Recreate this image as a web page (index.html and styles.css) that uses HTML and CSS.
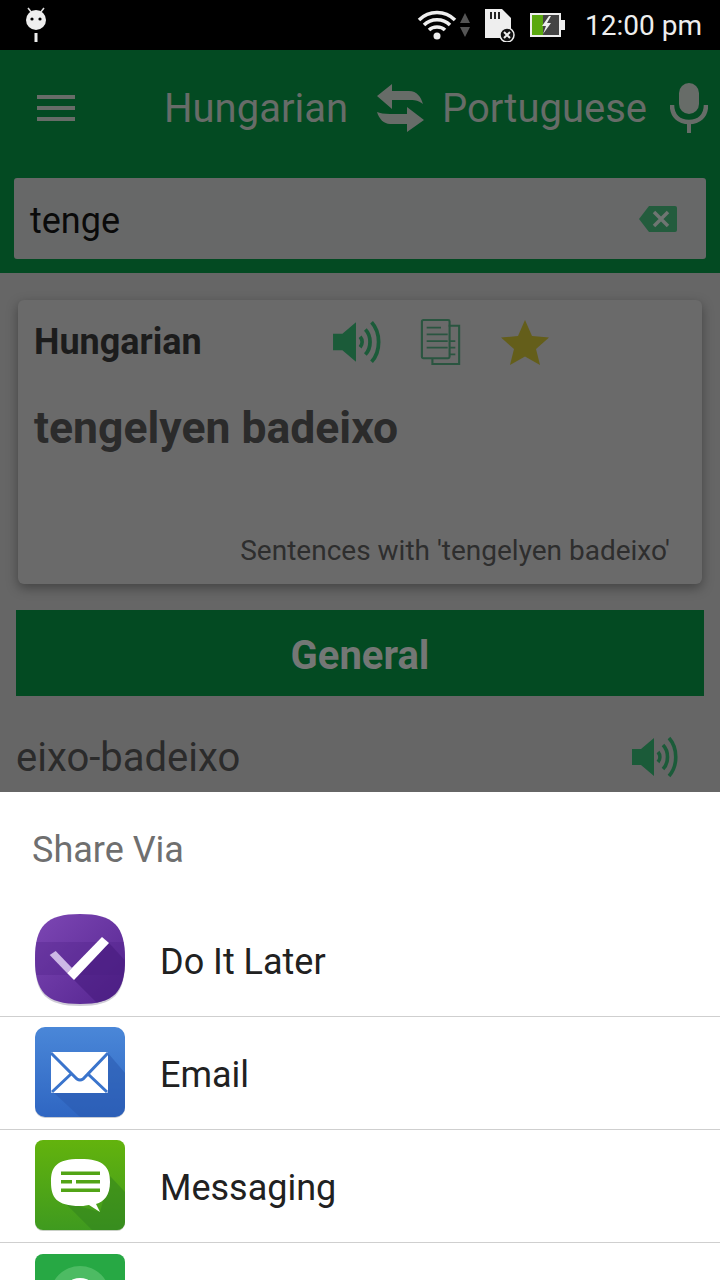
FILE: index.html
```html
<!DOCTYPE html>
<html lang="en">
<head>
<meta charset="utf-8">
<title>Share Via</title>
<link rel="stylesheet" href="styles.css">
</head>
<body>
<div class="screen">
  <div class="status">
    <svg class="st-android" width="26" height="44" viewBox="0 0 26 44"><path d="M5 5l4 5M21 5l-4 5" stroke="#ddd" stroke-width="1.600"/><circle cx="13" cy="17" r="10" fill="#eee"/><circle cx="9" cy="16" r="1.600" fill="#000"/><circle cx="17" cy="16" r="1.600" fill="#000"/><rect x="11.500" y="30" width="3" height="9" fill="#eee"/></svg>
    <div class="st-right">
      <svg width="40" height="34" viewBox="0 0 40 34"><path d="M2 12c10-10 26-10 36 0M7 17c7-7 19-7 26 0M12 22c4-4 12-4 16 0" fill="none" stroke="#eee" stroke-width="3.500"/><circle cx="20" cy="28" r="3.500" fill="#eee"/></svg>
      <svg class="st-arrows" width="12" height="28" viewBox="0 0 12 28"><path d="M6 2l5 10H1zM1 16h10L6 26z" fill="#555"/></svg>
      <svg class="st-sd" width="34" height="34" viewBox="0 0 34 34"><path d="M2 1h17l9 9v20H2z" fill="#eee"/><path d="M7 4h2v7H7zM11 4h2v7h-2zM15 4h2v7h-2z" fill="#222"/><circle cx="24" cy="27" r="7" fill="#111" stroke="#eee" stroke-width="1.500"/><path d="M21 24l6 6M27 24l-6 6" stroke="#eee" stroke-width="2"/></svg>
      <svg class="st-batt" width="38" height="28" viewBox="0 0 38 28"><rect x="1" y="2" width="31" height="24" fill="#eee"/><rect x="3" y="4" width="27" height="20" fill="#444"/><rect x="3" y="4" width="11" height="20" fill="#5aa80f"/><rect x="32" y="9" width="4" height="10" fill="#eee"/><path d="M20 5l-7 10h4l-3 8 8-11h-4l4-7z" fill="#eee"/></svg>
      <span class="st-time">12:00 pm</span>
    </div>
  </div>

  <header class="appbar">
    <div class="appbar-top">
      <svg class="menu" width="38" height="26" viewBox="0 0 38 26"><path d="M0 0h38v4H0zM0 11h38v4H0zM0 22h38v4H0z" fill="#676c68"/></svg>
      <span class="lang lang-a">Hungarian</span>
      <svg class="swap" width="48" height="48" viewBox="0 0 48 48"><path d="M1 12L16 0v7h17c8 0 12 6 14 13-5-4-9-4-14-4H16v9zM48 36L31 23v7H14c-6 0-10-1-13-2 2 7 7 12 13 12h17v8z" fill="#676c68"/></svg>
      <span class="lang lang-b">Portuguese</span>
      <svg class="mic" width="38" height="50" viewBox="0 0 38 50"><rect x="9" y="0" width="20" height="31" rx="10" fill="#676c68"/><path d="M2 22c0 11 7 17 17 17s17-6 17-17" fill="none" stroke="#676c68" stroke-width="4.500"/><rect x="17" y="38" width="4" height="12" fill="#676c68"/></svg>
    </div>
    <div class="search">
      <span class="search-text">tenge</span>
      <svg width="38" height="28" viewBox="0 0 38 28"><path d="M10 1h26a2 2 0 0 1 2 2v22a2 2 0 0 1-2 2H10L0 14z" fill="#235c3d"/><path d="M15 7l14 14M29 7L15 21" stroke="#6f7572" stroke-width="3.500"/></svg>
    </div>
  </header>

  <main class="content">
    <section class="card">
      <div class="card-head">
        <span class="card-lang">Hungarian</span>
        <div class="card-icons">
          <svg width="50" height="48" viewBox="0 0 48 46"><path d="M1 15h9L23 4v38L10 31H1z" fill="#1b5b39"/><path d="M27 18c2.500 3 2.500 7 0 10M32 11c6 6 6 18 0 24M38 4c9 10 9 28 0 38" fill="none" stroke="#1b5b39" stroke-width="3.600"/></svg>
          <svg width="42" height="48" viewBox="0 0 44 50"><path d="M30 8h11v40H13v-6" fill="none" stroke="#2a5540" stroke-width="2.200"/><rect x="2" y="2" width="29" height="40" rx="1.500" fill="none" stroke="#2a5540" stroke-width="2.200"/><path d="M7 10h15M7 17h22M7 24h22M7 31h22M31 24h6M31 31h6M31 38h6" stroke="#2a5540" stroke-width="1.800"/></svg>
          <svg width="50" height="46" viewBox="0 0 50 46"><path d="M25 1l7 16 17 1.500-13 11.500 4 16-15-8.500L10 46l4-16L1 18.500 18 17z" fill="#645e1a"/></svg>
        </div>
      </div>
      <h1 class="card-title">tengelyen badeixo</h1>
      <p class="card-link">Sentences with 'tengelyen badeixo'</p>
    </section>
    <div class="section-bar">General</div>
    <div class="row">
      <span class="row-text">eixo-badeixo</span>
      <svg width="50" height="46" viewBox="0 0 48 46"><path d="M1 15h9L23 4v38L10 31H1z" fill="#1b5b39"/><path d="M27 18c2.500 3 2.500 7 0 10M32 11c6 6 6 18 0 24M38 4c9 10 9 28 0 38" fill="none" stroke="#1b5b39" stroke-width="3.600"/></svg>
    </div>
  </main>

  <aside class="sheet">
    <h2 class="sheet-title">Share Via</h2>
    <ul class="apps">
      <li class="app">
        <svg class="app-icon" width="92" height="92" viewBox="0 0 92 92">
          <defs>
            <linearGradient id="p" x1="0" y1="0" x2="1" y2="1"><stop offset="0" stop-color="#7d47b4"/><stop offset="1" stop-color="#54248f"/></linearGradient>
            <clipPath id="sq"><path d="M46 0C80 0 91 12 91 45S80 90 46 90 1 78 1 45 12 0 46 0z"/></clipPath>
          </defs>
          <path d="M46 2C80 2 91 14 91 47S80 92 46 92 1 80 1 47 12 2 46 2z" fill="#cfccd6"/>
          <g clip-path="url(#sq)">
            <rect x="0" y="0" width="92" height="92" fill="url(#p)"/>
            <rect x="0" y="28" width="92" height="33" fill="#4f2189" opacity=".35"/>
            <path d="M40 66L75 29 96 52v40H66z" fill="#45197c" opacity=".55"/>
          </g>
          <path d="M15.700 41l6-4L38 54l-5 5z" fill="#cdb8e6"/>
          <path d="M33 59l7 7 35-37-7-6z" fill="#fff"/>
        </svg>
        <span class="app-name">Do It Later</span>
      </li>
      <li class="app">
        <svg class="app-icon" width="92" height="92" viewBox="0 0 92 92">
          <defs><linearGradient id="b" x1="0" y1="0" x2="0" y2="1"><stop offset="0" stop-color="#4a87d8"/><stop offset="1" stop-color="#2f66c2"/></linearGradient></defs>
          <rect x="1" y="1" width="90" height="90" rx="10" fill="#c8ccd4"/>
          <rect x="1" y="0" width="90" height="90" rx="10" fill="url(#b)"/>
          <path d="M20 66L74 26l17 20v34a10 10 0 0 1-10 10H46z" fill="#2a5aae" opacity=".55"/>
          <rect x="17" y="25" width="57" height="41" rx="1.500" fill="#fff"/>
          <path d="M17 26l26 26q3 2 6 0l25-26M18 65l19-18M73 65L54 47" fill="none" stroke="#3a74cc" stroke-width="3"/>
        </svg>
        <span class="app-name">Email</span>
      </li>
      <li class="app">
        <svg class="app-icon" width="92" height="92" viewBox="0 0 92 92">
          <defs><linearGradient id="g" x1="0" y1="0" x2="0" y2="1"><stop offset="0" stop-color="#63b30d"/><stop offset="1" stop-color="#3f9a1f"/></linearGradient></defs>
          <rect x="1" y="1" width="90" height="90" rx="8" fill="#c9d0c6"/>
          <rect x="1" y="0" width="90" height="90" rx="8" fill="url(#g)"/>
          <path d="M30 62l36 10 10-36 15 16v30a8 8 0 0 1-8 8H58z" fill="#2f7f1e" opacity=".5"/>
          <path d="M46 19C70 19 76 27 76 42 76 55 70 62 62 64L66 72 55 65C50 66 48 66 46 66 22 66 17 57 17 42 17 27 22 19 46 19z" fill="#fff"/>
          <path d="M27 31.500h39v3.500H27zM27 40h11v3.500H27zM42 40h24v3.500H42zM27 48.500h39v3.500H27z" fill="#52a416"/>
        </svg>
        <span class="app-name">Messaging</span>
      </li>
      <li class="app app-cut">
        <svg class="app-icon" width="92" height="92" viewBox="0 0 92 92">
          <rect x="1" y="0" width="90" height="90" rx="8" fill="#27a844"/>
          <circle cx="46" cy="42" r="30" fill="#4dbb63"/>
          <circle cx="46" cy="42" r="18" fill="#fff"/>
        </svg>
      </li>
    </ul>
  </aside>
</div>
</body>
</html>
```
FILE: styles.css
```css
* { box-sizing: border-box; }
html, body { margin: 0; padding: 0; }
body { font-family: Roboto, "Liberation Sans", sans-serif; background: #000; }
.screen { position: relative; width: 720px; height: 1280px; overflow: hidden; background: #666; }

.status { height: 50px; background: #000; display: flex; justify-content: space-between; align-items: center; padding: 0 18px 0 23px; }
.st-right { display: flex; align-items: center; }
.st-time { color: #eee; font-size: 28px; margin-left: 18px; }
.st-arrows { margin-left: 2px; }
.st-sd { margin-left: 12px; }
.st-batt { margin-left: 12px; }

.appbar { background: #034a22; height: 223px; padding-top: 27px; }
.appbar-top { display: flex; align-items: center; height: 62px; padding-left: 37px; }
.lang { color: #676c68; font-size: 40px; }
.lang-a { margin-left: 89px; }
.swap { margin-left: 28px; }
.lang-b { margin-left: 18px; }
.mic { margin-left: 23px; }
.search { margin: 39px 14px 0; height: 81px; background: #676868; border-radius: 3px; display: flex; align-items: center; justify-content: space-between; padding: 0 29px 0 16px; }
.search-text { font-size: 36px; color: #0a0a0a; padding-top: 4px; }

.content { padding: 27px 16px 0; }
.card { margin: 0 2px; height: 284px; background: #6a6a6a; border-radius: 6px; box-shadow: 0 4px 12px rgba(0,0,0,.35); padding: 0 32px 0 16px; position: relative; }
.card-head { display: flex; align-items: center; height: 84px; }
.card-lang { font-size: 36px; font-weight: 700; color: #1c1c1c; width: 298px; flex: none; }
.card-icons { display: flex; align-items: center; gap: 38px; }
.card-title { margin: 13px 0 0; font-size: 44.500px; font-weight: 700; color: #2b2b2b; line-height: 62px; }
.card-link { position: absolute; right: 32px; bottom: 17px; margin: 0; font-size: 28px; color: #2e2e2e; }
.section-bar { margin-top: 26px; height: 86px; background: #034a22; color: #747775; font-size: 40px; font-weight: 700; display: flex; align-items: center; justify-content: center; padding-top: 4px; }
.row { display: flex; justify-content: space-between; align-items: center; height: 96px; padding: 26px 24px 0 0; }
.row-text { font-size: 40px; color: #2b2b2b; }

.sheet { position: absolute; left: 0; right: 0; top: 792px; bottom: 0; background: #fff; }
.sheet-title { margin: 0; height: 112px; padding: 37px 0 0 32px; font-size: 36px; font-weight: 400; line-height: 42px; color: #6f6f6f; }
.apps { list-style: none; margin: 0; padding: 0; }
.app { height: 113px; display: flex; align-items: center; gap: 34px; padding: 0 0 0 34px; border-bottom: 1px solid #cfcfcf; }
.app-cut { border-bottom: 0; align-items: flex-start; padding-top: 11px; }
.app-icon { flex: none; }
.app-name { font-size: 36px; color: #212121; padding-top: 4px; }
```
